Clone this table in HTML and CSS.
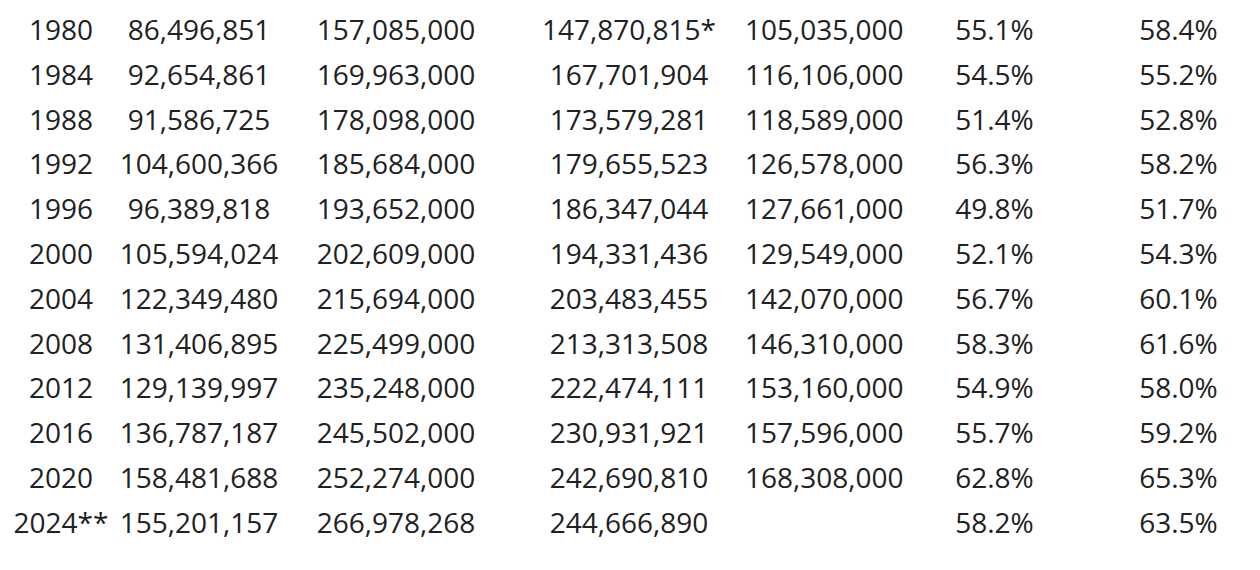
FILE: index.html
```html
<!DOCTYPE html>
<html lang="en">
<head>
<meta charset="utf-8">
<title>Turnout</title>
<link rel="stylesheet" href="styles.css">
</head>
<body>
<table class="turnout">
  <colgroup>
    <col class="c1"><col class="c2"><col class="c3"><col class="c4"><col class="c5"><col class="c6"><col class="c7">
  </colgroup>
  <tbody>
    <tr><td>1980</td><td>86,496,851</td><td>157,085,000</td><td>147,870,815*</td><td>105,035,000</td><td>55.1%</td><td>58.4%</td></tr>
    <tr><td>1984</td><td>92,654,861</td><td>169,963,000</td><td>167,701,904</td><td>116,106,000</td><td>54.5%</td><td>55.2%</td></tr>
    <tr><td>1988</td><td>91,586,725</td><td>178,098,000</td><td>173,579,281</td><td>118,589,000</td><td>51.4%</td><td>52.8%</td></tr>
    <tr><td>1992</td><td>104,600,366</td><td>185,684,000</td><td>179,655,523</td><td>126,578,000</td><td>56.3%</td><td>58.2%</td></tr>
    <tr><td>1996</td><td>96,389,818</td><td>193,652,000</td><td>186,347,044</td><td>127,661,000</td><td>49.8%</td><td>51.7%</td></tr>
    <tr><td>2000</td><td>105,594,024</td><td>202,609,000</td><td>194,331,436</td><td>129,549,000</td><td>52.1%</td><td>54.3%</td></tr>
    <tr><td>2004</td><td>122,349,480</td><td>215,694,000</td><td>203,483,455</td><td>142,070,000</td><td>56.7%</td><td>60.1%</td></tr>
    <tr><td>2008</td><td>131,406,895</td><td>225,499,000</td><td>213,313,508</td><td>146,310,000</td><td>58.3%</td><td>61.6%</td></tr>
    <tr><td>2012</td><td>129,139,997</td><td>235,248,000</td><td>222,474,111</td><td>153,160,000</td><td>54.9%</td><td>58.0%</td></tr>
    <tr><td>2016</td><td>136,787,187</td><td>245,502,000</td><td>230,931,921</td><td>157,596,000</td><td>55.7%</td><td>59.2%</td></tr>
    <tr><td>2020</td><td>158,481,688</td><td>252,274,000</td><td>242,690,810</td><td>168,308,000</td><td>62.8%</td><td>65.3%</td></tr>
    <tr><td>2024**</td><td>155,201,157</td><td>266,978,268</td><td>244,666,890</td><td></td><td>58.2%</td><td>63.5%</td></tr>
  </tbody>
</table>
</body>
</html>
```

FILE: styles.css
```css
html, body {
  margin: 0;
  padding: 0;
  overflow: hidden;
  background: #ffffff;
}

body {
  font-family: "Open Sans", "Noto Sans", sans-serif;
  font-size: 28px;
  line-height: 1.6;
  color: #202122;
}

.turnout {
  margin: 7px 0 0 3px;
  border-collapse: collapse;
  table-layout: fixed;
  width: 1267px;
}

.turnout td {
  padding: 0;
  text-align: center;
  white-space: nowrap;
  height: 44.8px;
}

.c1 { width: 116px; }
.c2 { width: 160px; }
.c3 { width: 234px; }
.c4 { width: 232px; }
.c5 { width: 157px; }
.c6 { width: 185px; }
.c7 { width: 183px; }
```
